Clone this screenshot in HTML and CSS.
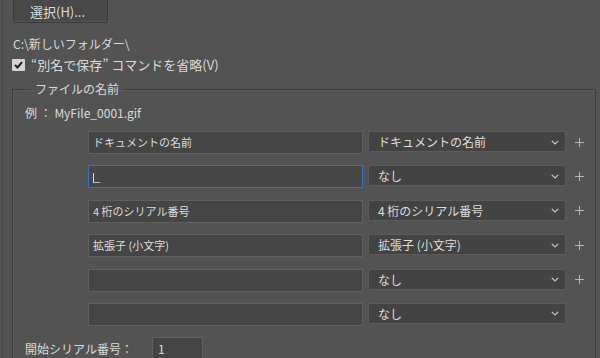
FILE: index.html
```html
<!DOCTYPE html>
<html lang="ja">
<head>
    <meta charset="UTF-8">
    <title>ファイル名の設定</title>
    <link rel="stylesheet" href="styles.css">
</head>
<body>
    <div class="panel">
        <button class="btn">選択(H)...</button>
        <div class="path">C:\新しいフォルダー\</div>
        <label class="check-row">
            <span class="checkbox">
                <svg width="9" height="8" viewBox="0 0 9 8"><polyline points="1,4 3.5,6.5 8,1.2" fill="none" stroke="#1e1e1e" stroke-width="2"/></svg>
            </span>
            “別名で保存” コマンドを省略(V)
        </label>

        <fieldset class="group">
            <legend>ファイルの名前</legend>
            <div class="example">例 ： MyFile_0001.gif</div>

            <div class="rows">
                <div class="row">
                    <div class="field">ドキュメントの名前</div>
                    <div class="select"><span>ドキュメントの名前</span><svg class="chev" width="8" height="5" viewBox="0 0 8 5"><polyline points="0.8,0.8 4,4 7.2,0.8" fill="none" stroke="#c8c8c8" stroke-width="1.2"/></svg></div>
                    <span class="plus"><svg width="9" height="9" viewBox="0 0 9 9"><path d="M4.5 0v9M0 4.5h9" stroke="#b4b4b4" stroke-width="1"/></svg></span>
                </div>
                <div class="row">
                    <div class="field focused"><span class="caret"></span>_</div>
                    <div class="select"><span>なし</span><svg class="chev" width="8" height="5" viewBox="0 0 8 5"><polyline points="0.8,0.8 4,4 7.2,0.8" fill="none" stroke="#c8c8c8" stroke-width="1.2"/></svg></div>
                    <span class="plus"><svg width="9" height="9" viewBox="0 0 9 9"><path d="M4.5 0v9M0 4.5h9" stroke="#b4b4b4" stroke-width="1"/></svg></span>
                </div>
                <div class="row">
                    <div class="field">4 桁のシリアル番号</div>
                    <div class="select"><span>4 桁のシリアル番号</span><svg class="chev" width="8" height="5" viewBox="0 0 8 5"><polyline points="0.8,0.8 4,4 7.2,0.8" fill="none" stroke="#c8c8c8" stroke-width="1.2"/></svg></div>
                    <span class="plus"><svg width="9" height="9" viewBox="0 0 9 9"><path d="M4.5 0v9M0 4.5h9" stroke="#b4b4b4" stroke-width="1"/></svg></span>
                </div>
                <div class="row">
                    <div class="field">拡張子 (小文字)</div>
                    <div class="select"><span>拡張子 (小文字)</span><svg class="chev" width="8" height="5" viewBox="0 0 8 5"><polyline points="0.8,0.8 4,4 7.2,0.8" fill="none" stroke="#c8c8c8" stroke-width="1.2"/></svg></div>
                    <span class="plus"><svg width="9" height="9" viewBox="0 0 9 9"><path d="M4.5 0v9M0 4.5h9" stroke="#b4b4b4" stroke-width="1"/></svg></span>
                </div>
                <div class="row">
                    <div class="field"></div>
                    <div class="select"><span>なし</span><svg class="chev" width="8" height="5" viewBox="0 0 8 5"><polyline points="0.8,0.8 4,4 7.2,0.8" fill="none" stroke="#c8c8c8" stroke-width="1.2"/></svg></div>
                    <span class="plus"><svg width="9" height="9" viewBox="0 0 9 9"><path d="M4.5 0v9M0 4.5h9" stroke="#b4b4b4" stroke-width="1"/></svg></span>
                </div>
                <div class="row">
                    <div class="field"></div>
                    <div class="select"><span>なし</span><svg class="chev" width="8" height="5" viewBox="0 0 8 5"><polyline points="0.8,0.8 4,4 7.2,0.8" fill="none" stroke="#c8c8c8" stroke-width="1.2"/></svg></div>
                    <span class="plus"></span>
                </div>
            </div>

            <div class="serial">
                <span>開始シリアル番号：</span>
                <div class="field small">1</div>
            </div>
        </fieldset>
    </div>
</body>
</html>
```

FILE: styles.css
```css
body {
    margin: 0;
    background: #535353;
    color: #dadada;
    font-family: "Noto Sans CJK JP", "Noto Sans", sans-serif;
    font-size: 12px;
    overflow: hidden;
    height: 358px;
}
.panel {
    margin-left: 2px;
    border-left: 1px solid #444;
    padding: 0 4px 0 9px;
    height: 358px;
    overflow: hidden;
}
.btn {
    display: block;
    margin: -2px 0 0 1px;
    width: 95px;
    height: 25px;
    background: #484848;
    border: 1px solid #3a3a3a;
    border-radius: 2px;
    box-shadow: inset 0 -1px 0 #555;
    color: #dcdcdc;
    font-family: inherit;
    font-size: 13px;
    text-align: left;
    padding: 2px 0 0 16px;
}
.path {
    margin-top: 13px;
    margin-left: 1px;
    line-height: 16px;
}
.check-row {
    display: flex;
    align-items: center;
    gap: 6px;
    margin-top: 5px;
    line-height: 16px;
    font-size: 13px;
}
.checkbox {
    width: 13px;
    height: 12px;
    background: #d4d4d4;
    border-radius: 1px;
    display: flex;
    align-items: center;
    justify-content: center;
}
.group {
    margin: 8px 0 0;
    padding: 0 0 0 12px;
    border: 1px solid #3e3e3e;
    box-shadow: inset 1px 1px 0 #5c5c5c;
    border-bottom: none;
    min-height: 300px;
}
.group legend {
    margin-left: 6px;
    padding: 0 4px;
    line-height: 16px;
    font-size: 12px;
}
.example {
    margin-top: 8px;
    line-height: 16px;
}
.rows {
    margin: 10px 0 0 63px;
    display: flex;
    flex-direction: column;
    gap: 11.4px;
}
.row {
    display: flex;
    align-items: center;
    height: 23px;
}
.field {
    box-sizing: border-box;
    width: 275px;
    height: 23px;
    background: #454545;
    border: 1px solid #5f5f5f;
    color: #dcdcdc;
    font-size: 11px;
    line-height: 21px;
    padding-left: 4px;
    display: flex;
    align-items: center;
}
.field.focused {
    border-color: #3a6fc2;
    background: #474747;
}
.caret {
    display: inline-block;
    width: 1px;
    height: 10px;
    background: #dcdcdc;
    margin-top: 2px;
}
.select {
    box-sizing: border-box;
    margin-left: 5px;
    width: 198px;
    height: 21px;
    margin-top: -2px;
    background: #434343;
    border: 1px solid #5b5b5b;
    border-radius: 2px;
    padding: 0 6px 0 9px;
    display: flex;
    align-items: center;
    justify-content: space-between;
    font-size: 12px;
    color: #dedede;
}
.chev {
    margin-top: 1px;
}
.plus {
    width: 9px;
    height: 9px;
    margin-left: 9px;
    margin-top: -1px;
    display: flex;
}
.serial {
    margin-top: 11px;
    display: flex;
    align-items: center;
    height: 23px;
}
.serial span {
    width: 127px;
}
.field.small {
    width: 51px;
    padding-left: 5px;
    font-size: 12px;
}
```
